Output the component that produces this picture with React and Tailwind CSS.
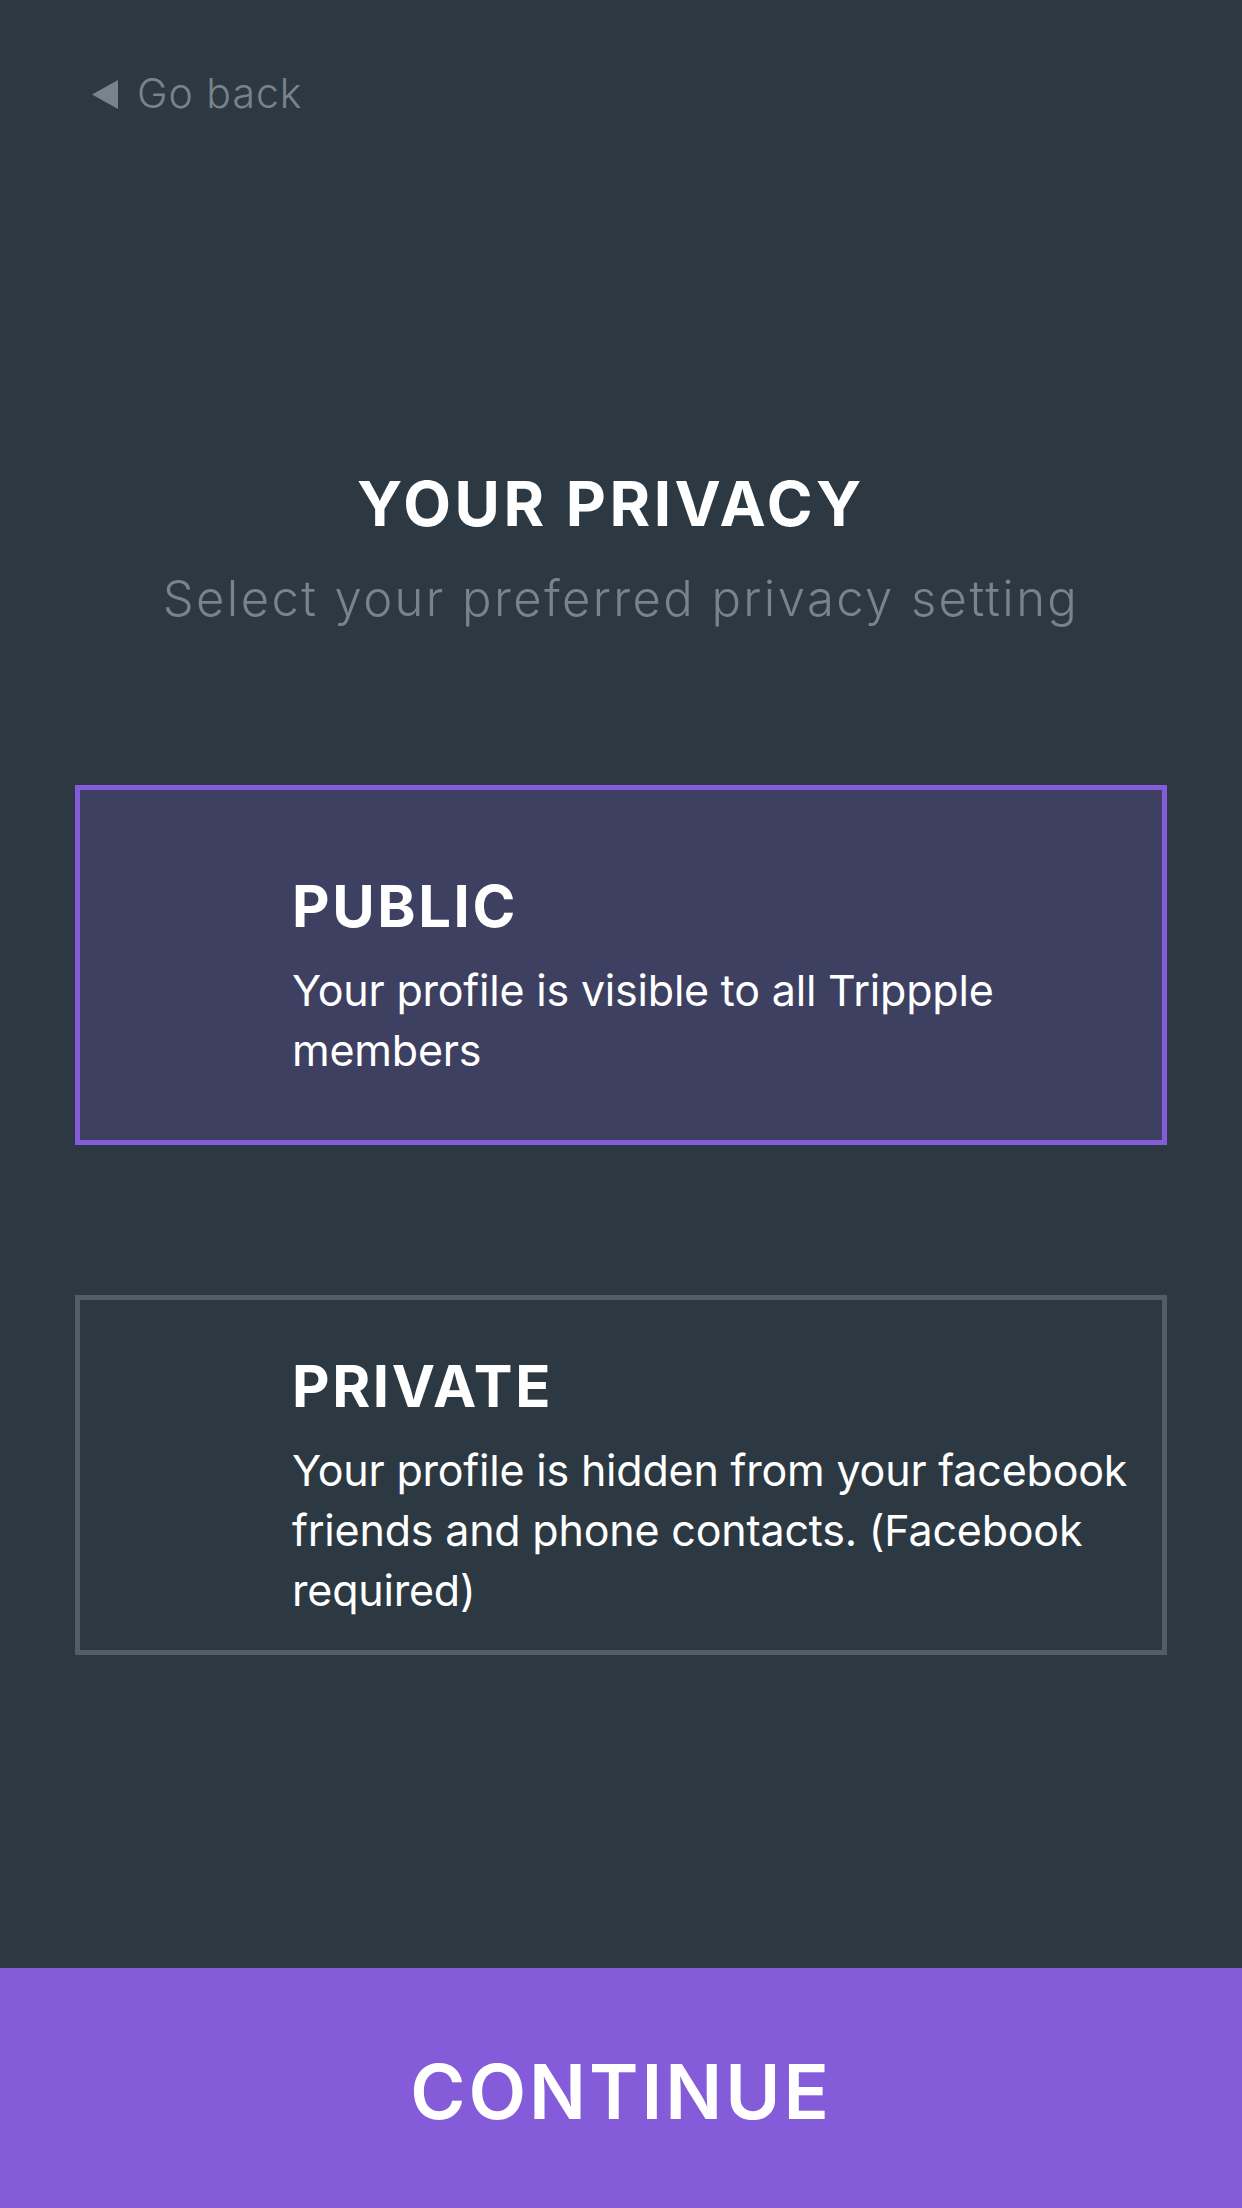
import { useState } from "react";

const options = [
  {
    id: "public",
    title: "PUBLIC",
    text: "Your profile is visible to all Trippple members",
  },
  {
    id: "private",
    title: "PRIVATE",
    text: "Your profile is hidden from your facebook friends and phone contacts. (Facebook required)",
  },
];

const App = () => {
  const [selected, setSelected] = useState("public");

  return (
    <div className="h-[2208px] w-full flex flex-col bg-[#2d3942] font-['Inter',sans-serif]">
      {/* back link */}
      <button className="mt-[68px] ml-[92px] flex items-center gap-[19px] text-[#78838c] self-start">
        <svg width="26" height="29" viewBox="0 0 26 29" className="mt-[2px]">
          <polygon points="26,0 26,29 0,14.5" fill="#78838c" />
        </svg>
        <span className="text-[41px] leading-[50px] font-light tracking-[1px]">Go back</span>
      </button>

      <div className="mt-[349px] flex flex-col items-center">
        <h1 className="mr-[20px] text-[62px] leading-[74px] font-bold tracking-[3.5px] text-white">YOUR PRIVACY</h1>
        <p className="mt-[28px] text-[49px] leading-[60px] font-light tracking-[2.4px] text-[#78838c]">
          Select your preferred privacy setting
        </p>
      </div>

      <div className="mt-[156px] mx-[75px] flex flex-col gap-[150px]">
        {options.map((opt) => {
          const active = selected === opt.id;
          return (
            <button
              key={opt.id}
              onClick={() => setSelected(opt.id)}
              className={`h-[360px] border-[5px] flex items-center pt-[21px] pl-[212px] pr-[22px] text-left ${
                active ? "bg-[#3e4061] border-[#845bd9]" : "bg-transparent border-[#525e66]"
              }`}
            >
              <div>
                <h2 className="text-[58px] leading-[70px] font-bold tracking-[2.6px] text-white">{opt.title}</h2>
                <p className="mt-[19px] text-[43px] leading-[60px] tracking-[-0.2px] text-white">{opt.text}</p>
              </div>
            </button>
          );
        })}
      </div>

      <button className="mt-auto h-[240px] w-full bg-[#845bd9] flex items-center justify-center">
        <span className="mt-[6px] text-[75px] leading-none font-semibold tracking-[3px] text-white">CONTINUE</span>
      </button>
    </div>
  );
};

export default App;
